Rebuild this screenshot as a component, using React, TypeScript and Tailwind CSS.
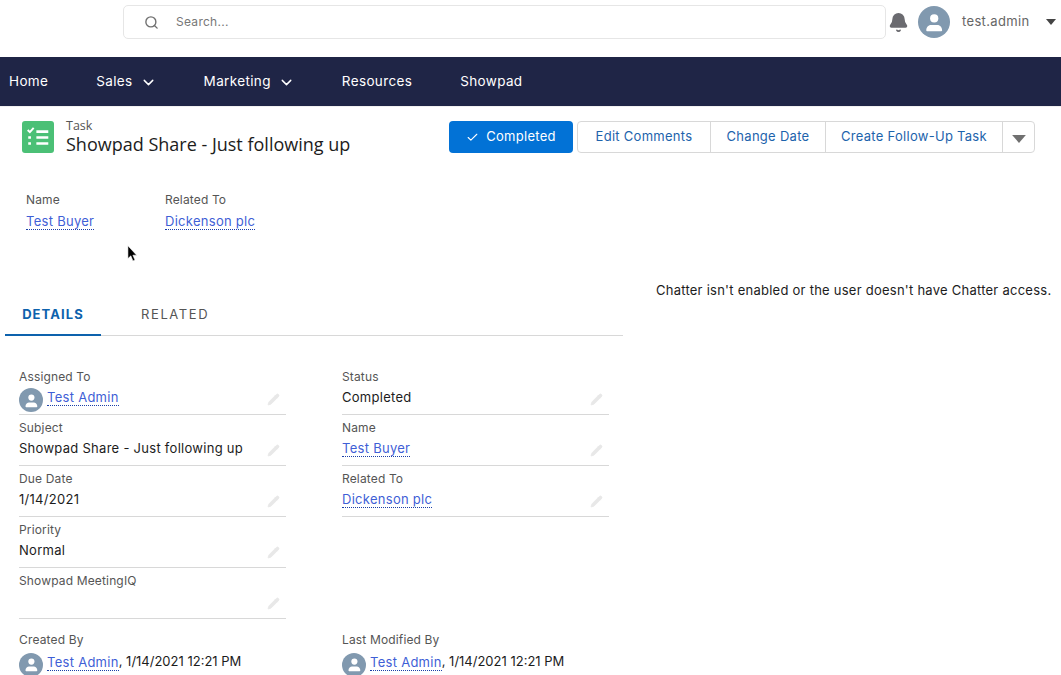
import { Search, ChevronDown, Check, Bell, Pencil } from "lucide-react";

const font = "font-['Inter','Liberation_Sans',sans-serif]";

const Avatar = ({ size }: { size: string }) => (
  <div className={`${size} rounded-full bg-[#8199af] flex items-center justify-center shrink-0 overflow-hidden`}>
    <svg viewBox="0 0 24 24" className="w-[70%] h-[70%]" fill="#fff">
      <circle cx="12" cy="8" r="4.4" />
      <path d="M3.500 20.500c0-3.600 3-5.600 5-5.600h7c2 0 5 2 5 5.600 0 .8-.6 1.200-1.200 1.200H4.700c-.6 0-1.200-.4-1.200-1.200z" />
    </svg>
  </div>
);

const DotLink = ({ children }: { children: string }) => (
  <span className="text-[#3f5fd6] border-b border-dotted border-[#1b3fa8] leading-[16px] inline-block">{children}</span>
);

const Caret = ({ className }: { className: string }) => (
  <svg viewBox="0 0 12 7" className={className} fill="currentColor">
    <path d="M0 0h12L6 7z" />
  </svg>
);

const Label = ({ children }: { children: string }) => (
  <div className="text-[12px] leading-[16px] tracking-[0.15px] text-[#555]">{children}</div>
);

const Field = ({ label, children }: { label: string; children?: React.ReactNode }) => (
  <div className="h-[51px] border-b border-[#d8d8d8] relative pt-[5px] box-border">
    <Label>{label}</Label>
    <div className="text-[13px] leading-[20px] h-[24px] flex items-center text-[#1c1c1c]">{children}</div>
    <Pencil className="absolute right-[6px] bottom-[8px] w-[13px] h-[13px] text-[#e8e8e8]" fill="#e8e8e8" strokeWidth={1.5} />
  </div>
);

const NavItem = ({ label, menu }: { label: string; menu?: boolean }) => (
  <div className="flex items-center gap-[7px]">
    <span>{label}</span>
    {menu && <ChevronDown className="w-[17px] h-[17px] mt-[2px] -mr-[1px]" strokeWidth={2} />}
  </div>
);

const Stamp = ({ label }: { label: string }) => (
  <div className="pt-[13px]">
    <Label>{label}</Label>
    <div className="flex items-center h-[24px] mt-[2px] text-[#1c1c1c]">
      <div className="mr-[4px] mt-[5px]"><Avatar size="w-[24px] h-[24px]" /></div>
      <DotLink>Test Admin</DotLink>
      <span className="tracking-normal">, 1/14/2021 12:21 PM</span>
    </div>
  </div>
);

export default function App() {
  return (
    <div className={`${font} relative w-[1061px] h-[675px] overflow-hidden bg-white text-[13px] tracking-[0.28px]`}>
      {/* top bar */}
      <div className="h-[57px] flex items-start pt-[5px] pl-[123px]">
        <div className="w-[763px] h-[34px] border border-[#e6e6e6] rounded-[5px] flex items-center pl-[20px] gap-[17px] text-[#777] text-[12px]">
          <Search className="w-[15px] h-[15px] text-[#707070]" strokeWidth={2.2} />
          <span>Search...</span>
        </div>
        <div className="flex items-center h-[34px] ml-[2px]">
          <Bell className="w-[21px] h-[21px] text-[#6b6b70]" fill="#6b6b70" />
          <div className="ml-[9px]"><Avatar size="w-[32px] h-[32px]" /></div>
          <span className="ml-[12px] text-[#666] tracking-[0.35px]">test.admin</span>
          <Caret className="ml-[16px] w-[10px] h-[6px] text-[#444]" />
        </div>
      </div>

      {/* nav */}
      <div className="h-[49px] bg-[#1f2546] flex items-center pl-[9px] gap-[48px] text-white text-[13.5px] tracking-[0.36px]">
        <NavItem label="Home" />
        <NavItem label="Sales" menu />
        <NavItem label="Marketing" menu />
        <NavItem label="Resources" />
        <NavItem label="Showpad" />
      </div>

      {/* record header */}
      <div className="h-[66px] flex items-start justify-between pl-[22px] pr-[26px] pt-[14px] border-t border-[#f0f0f0]">
        <div className="flex items-start">
          <div className="w-[32px] h-[32px] rounded-[3px] bg-[#4bc076] flex items-center justify-center">
            <svg viewBox="0 0 24 24" className="w-[26px] h-[26px]" stroke="#fff" fill="none" strokeWidth="2.4">
              <path d="M2.500 5.500l2 2 3.500-4" strokeWidth="1.800" />
              <path d="M10.500 7h11M10.500 12.500h11M10.500 18h11" />
              <path d="M3 12.500h2.500M3 18h2.500" />
            </svg>
          </div>
          <div className="ml-[12px] font-['Open_Sans',sans-serif] -mt-[3px] tracking-normal">
            <div className="text-[12.5px] leading-[16px] text-[#555]">Task</div>
            <div className="text-[18px] leading-[20px] text-[#1c1c1c] whitespace-nowrap">Showpad Share - Just following up</div>
          </div>
        </div>
        <div className="flex items-start gap-[4px]">
          <div className="w-[124px] h-[32px] rounded-[4px] bg-[#0272d6] text-white flex items-center justify-center gap-[7px]">
            <Check className="w-[13px] h-[13px]" strokeWidth={2} />
            <span>Completed</span>
          </div>
          <div className="h-[32px] flex border border-[#d8d8d8] rounded-[4px] text-[#1d63ac] divide-x divide-[#d8d8d8]">
            <div className="w-[133px] flex items-center justify-center">Edit Comments</div>
            <div className="w-[115px] flex items-center justify-center">Change Date</div>
            <div className="w-[177px] flex items-center justify-center">Create Follow-Up Task</div>
            <div className="w-[31px] flex items-center justify-center">
              <Caret className="w-[14px] h-[8px] text-[#707070] mt-[3px]" />
            </div>
          </div>
        </div>
      </div>

      {/* main */}
      <div className="flex">
        <div className="w-[623px] shrink-0">
          <div className="flex pl-[26px] h-[147px] pt-[20px] box-border">
            <div className="w-[139px]">
              <Label>Name</Label>
              <div className="mt-[4px]"><DotLink>Test Buyer</DotLink></div>
            </div>
            <div>
              <Label>Related To</Label>
              <div className="mt-[4px]"><DotLink>Dickenson plc</DotLink></div>
            </div>
          </div>

          <div className="ml-[5px] h-[51px] border-b border-[#d8d8d8] flex items-end box-border -mt-[34px]">
            <div className="w-[96px] h-[31px] border-b-[2px] border-[#0d62ad] text-center font-bold tracking-[1.1px] text-[#0d62ad] leading-[18px] -mb-[1px]">
              DETAILS
            </div>
            <div className="ml-[40px] h-[30px] tracking-[1.6px] text-[#555] leading-[18px]">RELATED</div>
          </div>

          <div className="pl-[19px] pt-[28px] grid grid-cols-[267px_267px] gap-x-[56px] items-start">
            <div>
              <Field label="Assigned To">
                <div className="mr-[4px] mt-[6px]"><Avatar size="w-[24px] h-[24px]" /></div>
                <DotLink>Test Admin</DotLink>
              </Field>
              <Field label="Subject">Showpad Share - Just following up</Field>
              <Field label="Due Date">1/14/2021</Field>
              <Field label="Priority">Normal</Field>
              <Field label="Showpad MeetingIQ" />
            </div>
            <div>
              <Field label="Status">Completed</Field>
              <Field label="Name"><DotLink>Test Buyer</DotLink></Field>
              <Field label="Related To"><DotLink>Dickenson plc</DotLink></Field>
            </div>
            <Stamp label="Created By" />
            <Stamp label="Last Modified By" />
          </div>
        </div>
        <div className="pl-[33px] pt-[108px] text-[#1c1c1c] whitespace-nowrap text-[13px] tracking-[0.25px] leading-[20px]">
          Chatter isn't enabled or the user doesn't have Chatter access.
        </div>
      </div>

      {/* mouse pointer */}
      <svg viewBox="0 0 12 18" className="absolute left-[127px] top-[245px] w-[11px] h-[18px]">
        <path d="M1 0v14l3.200-3 2.300 5.500 2.200-1-2.300-5.200H10.500z" fill="#000" stroke="#fff" strokeWidth="0.6" />
      </svg>
    </div>
  );
}
